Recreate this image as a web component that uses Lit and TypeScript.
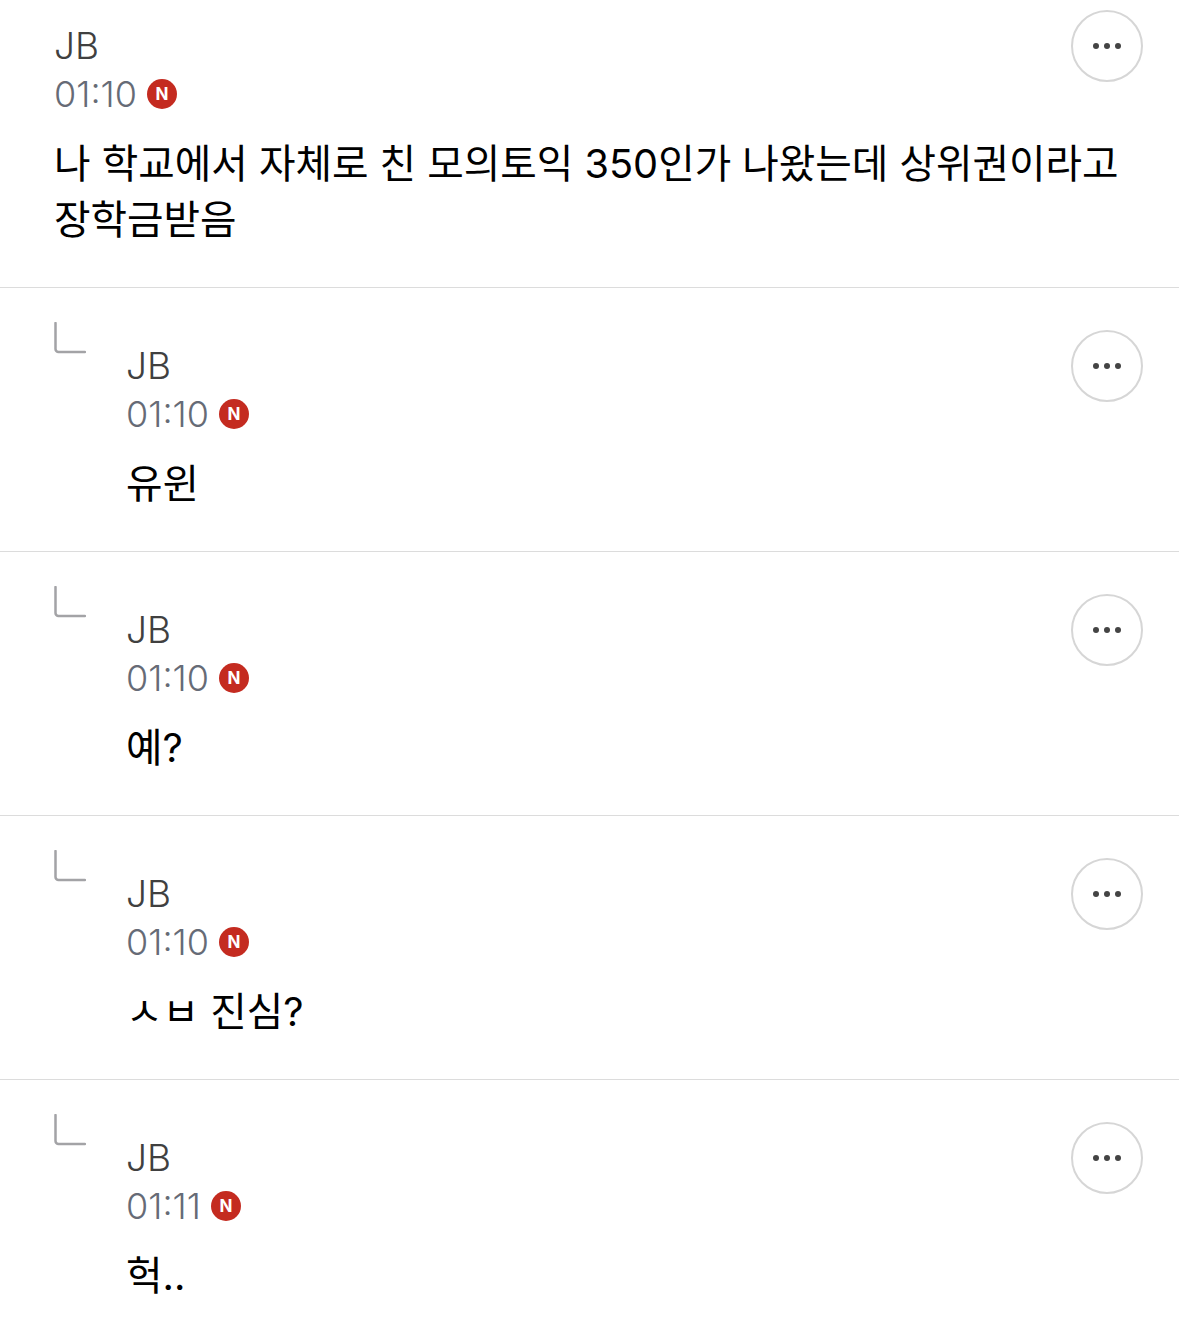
import { LitElement, html, css } from 'lit';
import { customElement, property } from 'lit/decorators.js';

type Comment = { time: string; text: string };

const TOP: Comment = {
  time: '01:10',
  text: '나 학교에서 자체로 친 모의토익 350인가 나왔는데 상위권이라고 장학금받음',
};

const REPLIES: Comment[] = [
  { time: '01:10', text: '유윈' },
  { time: '01:10', text: '예?' },
  { time: '01:10', text: 'ㅅㅂ 진심?' },
  { time: '01:11', text: '헉..' },
];

@customElement('comment-row')
export class CommentRow extends LitElement {
  @property({ type: Boolean, reflect: true }) reply = false;
  @property() time = '';
  @property() text = '';

  static styles = css`
    :host {
      display: flex;
      box-sizing: border-box;
      height: 264px;
      padding: 42px 36px 0 54px;
      border-bottom: 1px solid #dcdcdc;
    }
    :host(:not([reply])) {
      height: 288px;
      padding-top: 10px;
    }
    :host(:last-child) {
      border-bottom: none;
    }
    .arrow {
      flex: none;
      width: 32px;
      height: 32px;
      margin: -8px 40px 0 0;
    }
    .body {
      flex: 1;
      min-width: 0;
    }
    .name {
      font-size: 37px;
      font-weight: 350;
      line-height: 48px;
      height: 48px;
      margin-top: 12px;
      color: #404040;
    }
    .meta {
      display: flex;
      align-items: center;
      gap: 10px;
      height: 48px;
      font-size: 36px;
      font-weight: 300;
      color: #666b76;
    }
    .badge {
      width: 30px;
      height: 30px;
      border-radius: 50%;
      background: #c42b20;
      color: #fff;
      font-size: 17px;
      font-weight: 700;
      display: flex;
      align-items: center;
      justify-content: center;
    }
    .text {
      margin: 18px -60px 0 0;
      font-size: 39.7px;
      line-height: 56px;
      color: #000;
      word-break: keep-all;
    }
    .more {
      flex: none;
      box-sizing: border-box;
      width: 72px;
      height: 72px;
      border: 2px solid #d6d6d6;
      border-radius: 50%;
      display: flex;
      align-items: center;
      justify-content: center;
      gap: 5px;
    }
    .more i {
      width: 6px;
      height: 6px;
      border-radius: 50%;
      background: #444;
    }
  `;

  render() {
    return html`
      ${this.reply
        ? html`<svg class="arrow" viewBox="0 0 32 32" fill="none">
            <path d="M1.5 1v26a3 3 0 0 0 3 3H31" stroke="#a3a3a6" stroke-width="2.5" stroke-linecap="round" />
          </svg>`
        : null}
      <div class="body">
        <div class="name">JB</div>
        <div class="meta"><span>${this.time}</span><span class="badge">N</span></div>
        <div class="text">${this.text}</div>
      </div>
      <div class="more"><i></i><i></i><i></i></div>
    `;
  }
}

@customElement('app-root')
export class AppRoot extends LitElement {
  static styles = css`
    :host {
      display: block;
      height: 1325px;
      overflow: hidden;
      background: #fff;
      font-family: Inter, 'Noto Sans CJK KR', sans-serif;
    }
  `;

  render() {
    return html`
      <comment-row .time=${TOP.time} .text=${TOP.text}></comment-row>
      ${REPLIES.map(
        (r) => html`<comment-row reply .time=${r.time} .text=${r.text}></comment-row>`,
      )}
    `;
  }
}
